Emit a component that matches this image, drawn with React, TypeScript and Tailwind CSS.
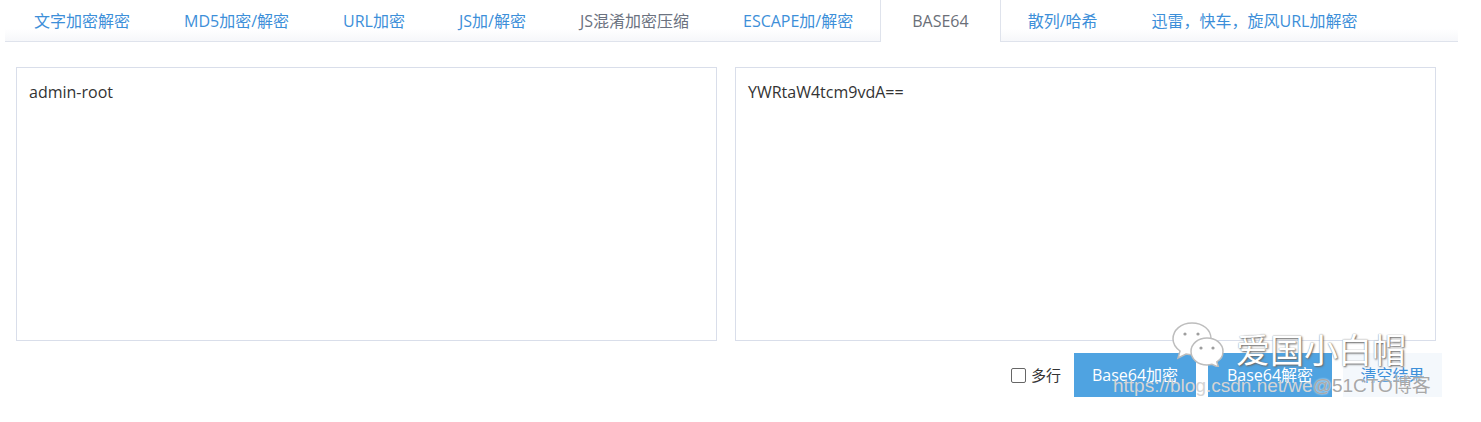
import React from "react";

const tabs = [
	{ label: "文字加密解密" },
	{ label: "MD5加密/解密" },
	{ label: "URL加密" },
	{ label: "JS加/解密" },
	{ label: "JS混淆加密压缩", muted: true },
	{ label: "ESCAPE加/解密" },
	{ label: "BASE64", active: true },
	{ label: "散列/哈希" },
	{ label: "迅雷，快车，旋风URL加解密" },
];

const font = {
	fontFamily: '"Open Sans", "Noto Sans CJK SC", sans-serif',
};

/* WeChat-style double bubble used by the watermark */
function WechatMark() {
	return (
		<svg width="58" height="46" viewBox="0 0 58 46" fill="none">
			<path
				d="M22 2C11 2 3 9 3 18c0 5 3 9 7 12l-2 7 8-4c2 .5 4 .8 6 .8 11 0 19-7 19-16S33 2 22 2z"
				fill="#fff"
				stroke="#bdbdbd"
				strokeWidth="1.5"
			/>
			<circle cx="15" cy="13" r="1.6" fill="#9e9e9e" />
			<circle cx="28" cy="13" r="1.6" fill="#9e9e9e" />
			<path
				d="M37 17c-9 0-16 6-16 13.5S28 44 37 44c1.8 0 3.4-.3 5-.7l6.5 3-1.7-5.5C51 38.5 53 35 53 30.5 53 23 46 17 37 17z"
				fill="#fff"
				stroke="#bdbdbd"
				strokeWidth="1.5"
			/>
			<circle cx="31" cy="27" r="1.6" fill="#9e9e9e" />
			<circle cx="43" cy="27" r="1.6" fill="#9e9e9e" />
		</svg>
	);
}

export default function App() {
	return (
		<div
			className="relative w-[1481px] h-[422px] bg-white overflow-hidden"
			style={font}
		>
			{/* Tabs */}
			<div className="ml-[5px] w-[1453px] h-[42px] flex border-b border-[#dfe3ec] bg-gradient-to-b from-white from-70% to-[#f6f7fa]">
				<div className="w-[2px]" />
				{tabs.map((t) => (
					<div
						key={t.label}
						className={
							t.active
								? "h-[42px] px-[31px] flex items-center text-[16px] text-[#6b6f78] bg-white border-x border-[#dfe3ec] -mb-px"
								: t.muted
									? "h-[41px] px-[27px] flex items-center text-[16px] text-[#6b7280]"
									: "h-[41px] px-[27px] flex items-center text-[16px] text-[#3d8fd9]"
						}
					>
						{t.label}
					</div>
				))}
			</div>

			{/* Input / output */}
			<div className="flex gap-[18px] ml-[16px] mt-[25px]">
				<div className="w-[701px] h-[274px] border border-[#d9deea] px-[12px] pt-[12px] text-[16px] text-[#333]">
					admin-root
				</div>
				<div className="w-[701px] h-[274px] border border-[#d9deea] px-[12px] pt-[12px] text-[16px] text-[#333]">
					YWRtaW4tcm9vdA==
				</div>
			</div>

			{/* Actions */}
			<div className="flex items-center justify-end mt-[12px] mr-[39px]">
				<label className="flex items-center gap-[5px] mr-[13px] text-[15px] text-[#333]">
					<span className="w-[15px] h-[15px] border border-[#666] rounded-[2px] bg-white" />
					多行
				</label>
				<button className="w-[122px] h-[44px] bg-[#4fa3e1] text-white text-[16px]">
					Base64加密
				</button>
				<button className="ml-[12px] w-[124px] h-[44px] bg-[#4fa3e1] text-white text-[16px]">
					Base64解密
				</button>
				<button className="ml-[11px] w-[99px] h-[44px] bg-[#f4f8fc] text-[#3d8fd9] text-[16px]">
					清空结果
				</button>
			</div>

			{/* Watermark */}
			<div className="absolute left-[1170px] top-[321px] flex items-end gap-[8px] pointer-events-none">
				<WechatMark />
				<span
					className="text-[34px] leading-none text-white"
					style={{ textShadow: "1px 1px 2px #666, 0 0 1px #888" }}
				>
					爱国小白帽
				</span>
			</div>
			<div
				className="absolute left-[1113px] top-[376px] text-[19px] leading-none pointer-events-none whitespace-nowrap"
				style={{ fontFamily: '"Liberation Sans", "Noto Sans CJK SC", sans-serif' }}
			>
				<span className="text-[#d4d4d4]">https://blog.csdn.net/we</span>
				<span
					className="text-[#a8a8a8]"
					style={{ textShadow: "0 0 2px #fff" }}
				>
					@51CTO博客
				</span>
			</div>
		</div>
	);
}
